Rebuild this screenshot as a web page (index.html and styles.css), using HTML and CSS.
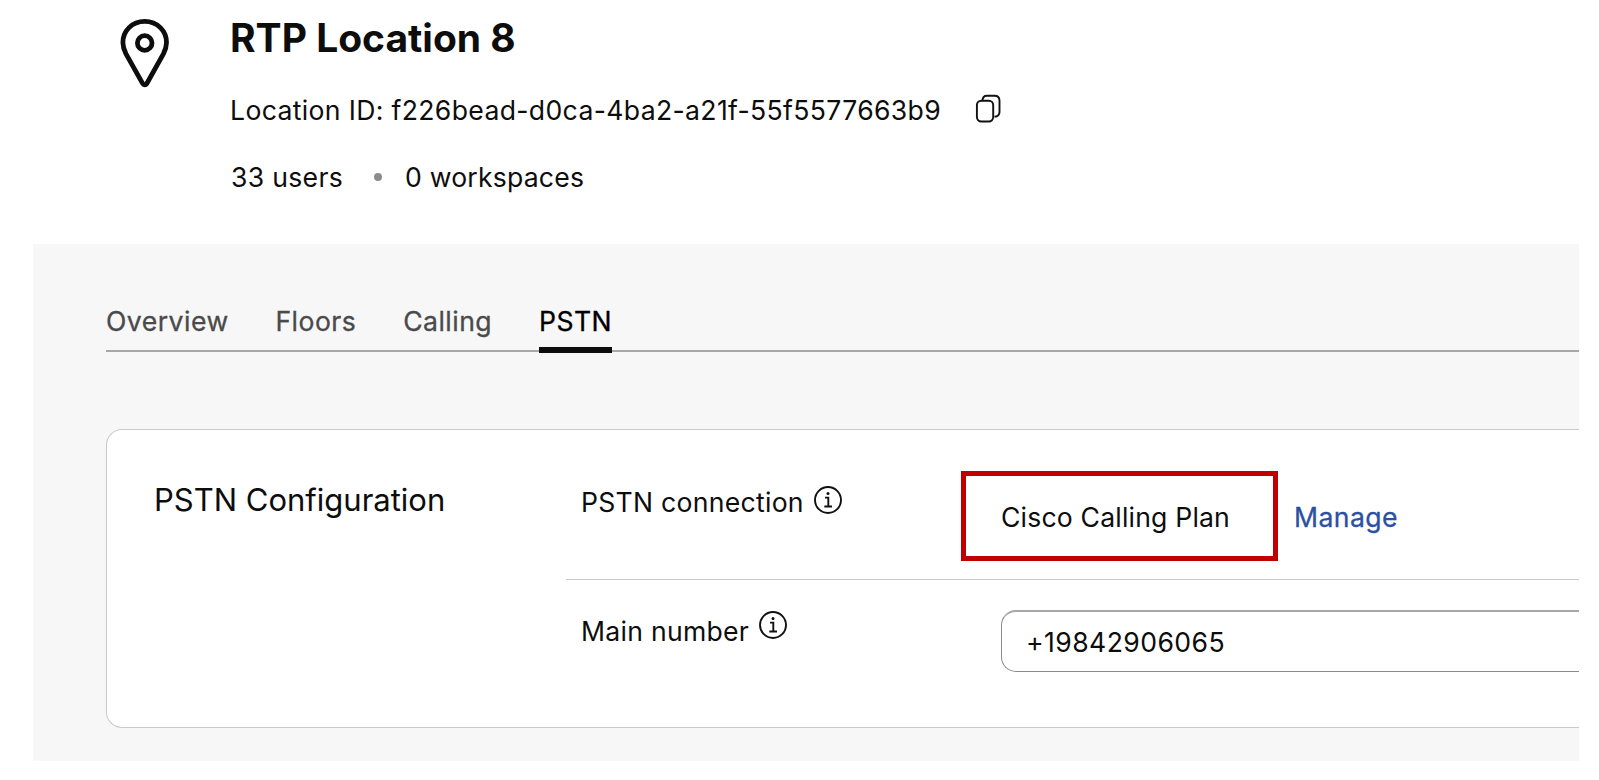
FILE: index.html
```
<!DOCTYPE html>
<html lang="en">
<head>
<meta charset="utf-8">
<title>RTP Location 8</title>
<link rel="stylesheet" href="styles.css">
</head>
<body>
<header class="location">
  <svg class="pin" width="54" height="72" viewBox="0 0 54 72" fill="none" stroke="#0d0d0d" stroke-width="4.8">
    <path d="M26.700 4.400C14 4.400 4.900 14 4.900 25.500c0 4.300 1.100 7.400 3.100 11.300L24.700 66.700c.9 1.600 3.100 1.600 4 0l16.700-29.900c2-3.900 3.100-7 3.100-11.300C48.500 14 39.400 4.400 26.700 4.400Z"/>
    <circle cx="26.700" cy="26" r="7.300"/>
  </svg>
  <div class="details">
    <h1 class="title">RTP Location 8</h1>
    <div class="id-row">
      <span class="id-text">Location ID: f226bead-d0ca-4ba2-a21f-55f5577663b9</span>
      <svg class="copy" width="28" height="32" viewBox="0 0 28 32" fill="none" stroke="#111" stroke-width="1.900">
        <rect x="2.900" y="7.700" width="16.300" height="20.800" rx="4.400"/>
        <path d="M8.400 7.700C8.600 4.700 10.200 2.800 12.900 2.800H20.500c3 0 5 2 5 5v11.300c0 2.600-2 4.500-5 4.700"/>
      </svg>
    </div>
    <div class="counts">
      <span class="users">33 users</span>
      <i class="dot"></i>
      <span class="workspaces">0 workspaces</span>
    </div>
  </div>
</header>
<main class="panel">
  <nav class="tabs">
    <a class="tab">Overview</a>
    <a class="tab">Floors</a>
    <a class="tab">Calling</a>
    <a class="tab active">PSTN</a>
  </nav>
  <section class="card">
    <h2 class="card-title">PSTN Configuration</h2>
    <div class="rows">
      <div class="row connection">
        <div class="label">
          <span class="label-text">PSTN connection</span>
          <svg class="info" width="30" height="30" viewBox="0 0 30 30" fill="none" stroke="#111" stroke-width="1.900">
            <circle cx="15" cy="15" r="13"/>
            <path d="M12 12.600h3.300v8.600M11.300 21.500h7.700"/>
            <circle cx="15" cy="8.600" r="1.500" fill="#111" stroke="none"/>
          </svg>
        </div>
        <div class="highlight"><span class="plan">Cisco Calling Plan</span></div>
        <a class="manage">Manage</a>
      </div>
      <div class="row number">
        <div class="label">
          <span class="label-text">Main number</span>
          <svg class="info raised" width="30" height="30" viewBox="0 0 30 30" fill="none" stroke="#111" stroke-width="1.900">
            <circle cx="15" cy="15" r="13"/>
            <path d="M12 12.600h3.300v8.600M11.300 21.500h7.700"/>
            <circle cx="15" cy="8.600" r="1.500" fill="#111" stroke="none"/>
          </svg>
        </div>
        <div class="field"><span class="phone">+19842906065</span></div>
      </div>
    </div>
  </section>
</main>
</body>
</html>
```
FILE: styles.css
```
* { box-sizing: border-box; }
body {
  margin: 0;
  width: 1599px;
  height: 780px;
  overflow: hidden;
  background: #fff;
  color: #0d0d0d;
  font: 400 26.6px/32px Inter, sans-serif;
  letter-spacing: 0.34px;
  white-space: nowrap;
}
h1, h2 { margin: 0; }
svg { display: block; flex: none; }

.location {
  display: flex;
  height: 244px;
  padding: 14px 0 0 118px;
}
.pin { margin-top: 3px; }
.details { margin-left: 58px; }
.title {
  font-size: 39px;
  font-weight: 700;
  line-height: 48px;
  letter-spacing: 0;
}
.id-row {
  display: flex;
  margin-top: 32px;
}
.id-text { width: 744px; }
.copy { margin-top: -1px; }
.counts {
  display: flex;
  align-items: center;
  margin-top: 35px;
  letter-spacing: 0.2px;
}
.users {
  width: 144px;
  padding-left: 1px;
  letter-spacing: 0.3px;
}
.dot {
  width: 8px;
  height: 8px;
  border-radius: 50%;
  background: #8c8c8c;
}
.workspaces { margin-left: 23px; }

.panel {
  width: 1546px;
  height: 517px;
  margin-left: 33px;
  padding: 61px 0 0 73px;
  background: #f7f7f7;
}
.tabs {
  display: flex;
  gap: 46.800px;
  height: 47px;
  border-bottom: 2px solid #a7a7a7;
  color: #4a4a4a;
  letter-spacing: 0.47px;
  -webkit-text-stroke: 0.3px currentColor;
}
.tab { height: 48px; }
.active {
  border-bottom: 6px solid #0d0d0d;
  color: #000;
}

.card {
  display: flex;
  height: 299px;
  margin-top: 77px;
  background: #fff;
  border: 1px solid #cacaca;
  border-right: 0;
  border-radius: 16px 0 0 16px;
}
.card-title {
  width: 459px;
  padding: 51px 0 0 47px;
  font-size: 31px;
  font-weight: 400;
  line-height: 38px;
  letter-spacing: 0;
}
.rows { flex: 1; }
.row { display: flex; padding-left: 15px; }
.label {
  display: flex;
  gap: 9px;
  width: 380px;
  letter-spacing: 0.27px;
}
.connection {
  height: 150px;
  padding-top: 41px;
  border-bottom: 1px solid #cacaca;
}
.connection .label { padding-top: 15px; }
.info { margin-top: -1px; }
.raised { margin-top: -5px; }
.highlight {
  width: 317px;
  height: 90px;
  padding: 25px 0 0 35px;
  border: 5px solid #c00000;
  letter-spacing: 0.18px;
}
.manage {
  margin-left: 16px;
  padding-top: 30px;
  color: #2b4fa3;
  letter-spacing: 0.42px;
  -webkit-text-stroke: 0.3px currentColor;
}
.number { padding-top: 30px; }
.number .label {
  width: 420px;
  padding-top: 5px;
}
.field {
  flex: 1;
  height: 62px;
  padding: 14px 0 0 24px;
  border: 1px solid #8a8a8a;
  border-top: 2px solid #a7a7a7;
  border-right: 0;
  border-radius: 15px 0 0 15px;
  letter-spacing: 0.42px;
}
```
